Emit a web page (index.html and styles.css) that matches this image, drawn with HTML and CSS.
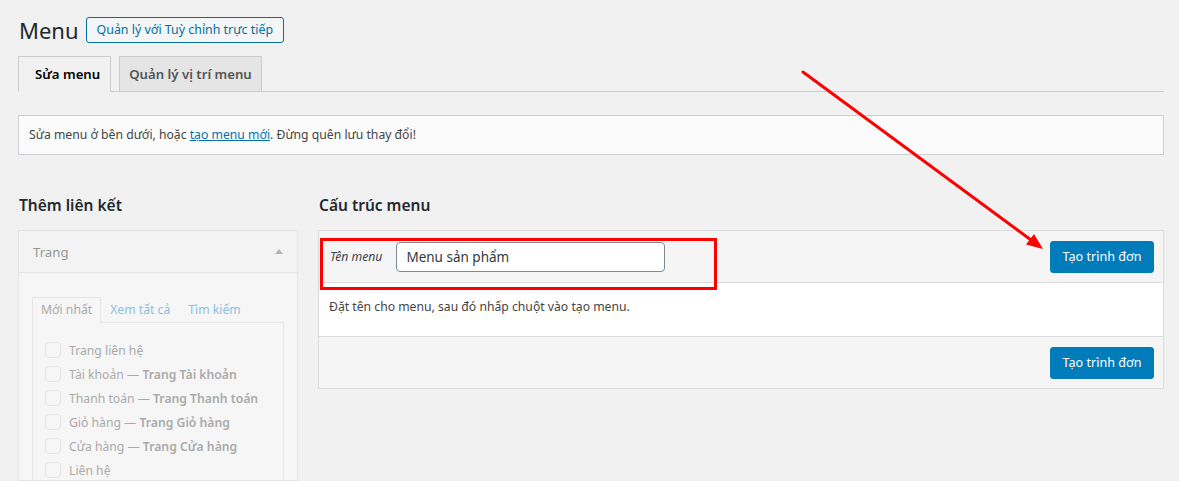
FILE: index.html
```html
<!DOCTYPE html>
<html lang="vi">
<head>
  <meta charset="UTF-8">
  <title>Menu</title>
  <link rel="stylesheet" href="styles.css">
</head>
<body>

<div class="wrap">
    <div class="tieu-de">
        <h1>Menu</h1>
        <a href="#" class="nut-phu">Quản lý với Tuỳ chỉnh trực tiếp</a>
    </div>

    <div class="tabs">
        <a href="#" class="tab active">Sửa menu</a>
        <a href="#" class="tab">Quản lý vị trí menu</a>
    </div>

    <div class="thong-bao">
        Sửa menu ở bên dưới, hoặc <a href="#">tạo menu mới</a>. Đừng quên lưu thay đổi!
    </div>

    <div class="cot-chinh">
        <!-- Cot trai -->
        <div class="cot-trai">
            <h2>Thêm liên kết</h2>
            <div class="hop-trang">
                <div class="hop-tieu-de">
                    <span>Trang</span>
                    <span class="tam-giac"></span>
                </div>
                <div class="hop-noi-dung">
                    <div class="tab-nho">
                        <span class="tn active">Mới nhất</span>
                        <span class="tn">Xem tất cả</span>
                        <span class="tn">Tìm kiếm</span>
                    </div>
                    <ul class="danh-sach">
                        <li><span class="o-chon"></span><span>Trang liên hệ</span></li>
                        <li><span class="o-chon"></span><span>Tài khoản — <b>Trang Tài khoản</b></span></li>
                        <li><span class="o-chon"></span><span>Thanh toán — <b>Trang Thanh toán</b></span></li>
                        <li><span class="o-chon"></span><span>Giỏ hàng — <b>Trang Giỏ hàng</b></span></li>
                        <li><span class="o-chon"></span><span>Cửa hàng — <b>Trang Cửa hàng</b></span></li>
                        <li><span class="o-chon"></span><span>Liên hệ</span></li>
                    </ul>
                </div>
            </div>
        </div>

        <!-- Cot phai -->
        <div class="cot-phai">
            <h2>Cấu trúc menu</h2>
            <div class="hop-menu">
                <div class="menu-dau">
                    <label>Tên menu</label>
                    <input type="text" value="Menu sản phẩm">
                    <span class="khoang"></span>
                    <button class="nut-xanh">Tạo trình đơn</button>
                    <div class="khung-do"></div>
                </div>
                <div class="menu-than">
                    Đặt tên cho menu, sau đó nhấp chuột vào tạo menu.
                </div>
                <div class="menu-cuoi">
                    <button class="nut-xanh">Tạo trình đơn</button>
                </div>
            </div>
        </div>
    </div>
</div>

<!-- mui ten chu thich -->
<svg class="mui-ten" width="1179" height="481" viewBox="0 0 1179 481">
    <line x1="803" y1="72" x2="1031" y2="240" stroke="#ff0000" stroke-width="3" stroke-linecap="round"/>
    <polygon points="1043,249 1026,244.5 1034,234" fill="#ff0000"/>
</svg>

</body>
</html>
```

FILE: styles.css
```css
* {
    box-sizing: border-box;
}

body {
    margin: 0;
    background: #f1f1f1;
    font-family: "Noto Sans", "Open Sans", sans-serif;
    font-size: 12.2px;
    color: #444;
    position: relative;
    height: 481px;
    overflow: hidden;
}

.wrap {
    padding: 16px 15px 0 18px;
}

.tieu-de {
    display: flex;
    align-items: center;
    height: 28px;
}

.tieu-de h1 {
    margin: 0 7px 0 1px;
    font-size: 22px;
    font-weight: 400;
    color: #23282d;
}

.nut-phu {
    display: inline-block;
    border: 1px solid #0071a1;
    border-radius: 3px;
    background: #f3f5f6;
    color: #0071a1;
    text-decoration: none;
    padding: 0 10px;
    line-height: 24px;
    font-size: 12.4px;
}

/* Tabs */
.tabs {
    display: flex;
    gap: 8px;
    margin-top: 12px;
    border-bottom: 1px solid #ccc;
}

.tab {
    display: block;
    border: 1px solid #ccc;
    margin-bottom: -1px;
    background: #e5e5e5;
    color: #555;
    text-decoration: none;
    font-size: 13.2px;
    font-weight: 600;
    padding: 5px 9px;
    line-height: 24px;
}

.tab.active {
    background: #f1f1f1;
    color: #000;
    border-bottom-color: #f1f1f1;
    padding: 5px 10px 5px 16px;
}

.thong-bao {
    margin-top: 23px;
    border: 1px solid #ccd0d4;
    background: #fbfbfb;
    padding: 11px 10px;
    line-height: 16px;
}

.thong-bao a {
    color: #0073aa;
}

/* Cot */
.cot-chinh {
    display: flex;
    gap: 20px;
    margin-top: 39px;
}

.cot-chinh h2 {
    margin: 0 0 14px 1px;
    font-size: 15.5px;
    line-height: 22px;
    font-weight: 600;
    color: #23282d;
}

.cot-trai {
    width: 280px;
    flex: none;
}

.cot-phai {
    flex: 1;
}

.hop-trang {
    border: 1px solid #e2e4e6;
    background: #f6f6f6;
    height: 251px;
    overflow: hidden;
}

.hop-tieu-de {
    display: flex;
    justify-content: space-between;
    align-items: center;
    height: 42px;
    padding: 0 14px;
    border-bottom: 1px solid #e4e4e4;
    background: #f3f3f3;
    color: #999;
    font-size: 13.2px;
}

.tam-giac {
    width: 0;
    height: 0;
    border-left: 4px solid transparent;
    border-right: 4px solid transparent;
    border-bottom: 5px solid #b4b4b4;
}

.hop-noi-dung {
    padding: 24px 13px 0 13px;
}

.tab-nho {
    display: flex;
}

.tn {
    padding: 0 8px;
    line-height: 24px;
    color: #8cbfe0;
    border: 1px solid transparent;
    border-bottom: none;
}

.tn.active {
    color: #aaa;
    border-color: #e6e6e6;
    background: #f6f6f6;
    margin-bottom: -1px;
    height: 26px;
}

.danh-sach {
    list-style: none;
    margin: 0;
    padding: 15px 12px 0 12px;
    border: 1px solid #e6e6e6;
    height: 200px;
    color: #aaa;
    white-space: nowrap;
}

.danh-sach li {
    display: flex;
    align-items: center;
    height: 24px;
}

.danh-sach b {
    font-weight: 600;
}

.o-chon {
    flex: none;
    width: 16px;
    height: 16px;
    border: 1px solid #e4e4e4;
    border-radius: 4px;
    background: #f6f6f6;
    margin-right: 8px;
}

/* Hop menu */
.hop-menu {
    border: 1px solid #dcdcde;
    background: #fff;
}

.menu-dau {
    position: relative;
    display: flex;
    align-items: center;
    height: 52px;
    padding: 0 9px 0 11px;
    background: #f5f5f5;
    border-bottom: 1px solid #dcdcde;
}

.menu-dau label {
    font-style: italic;
    color: #3c434a;
    margin-right: 14px;
}

.menu-dau input {
    width: 269px;
    height: 30px;
    border: 1px solid #7e8993;
    border-radius: 4px;
    padding: 0 9px;
    font-family: "Noto Sans", sans-serif;
    font-size: 13.5px;
    color: #32373c;
}

.khoang {
    flex: 1;
}

.nut-xanh {
    background: #007cba;
    border: 1px solid #007cba;
    border-radius: 3px;
    color: #fff;
    font-family: "Noto Sans", sans-serif;
    font-size: 12.6px;
    height: 32px;
    width: 104px;
    padding: 0;
}

.khung-do {
    position: absolute;
    left: 1px;
    top: 7px;
    width: 397px;
    height: 52px;
    border: 3px solid #ff0000;
}

.menu-than {
    height: 53px;
    padding: 15px 10px;
    color: #444;
}

.menu-cuoi {
    display: flex;
    justify-content: flex-end;
    align-items: center;
    height: 52px;
    padding: 0 9px;
    background: #f5f5f5;
    border-top: 1px solid #dcdcde;
}

.mui-ten {
    position: absolute;
    left: 0;
    top: 0;
    pointer-events: none;
}
```
